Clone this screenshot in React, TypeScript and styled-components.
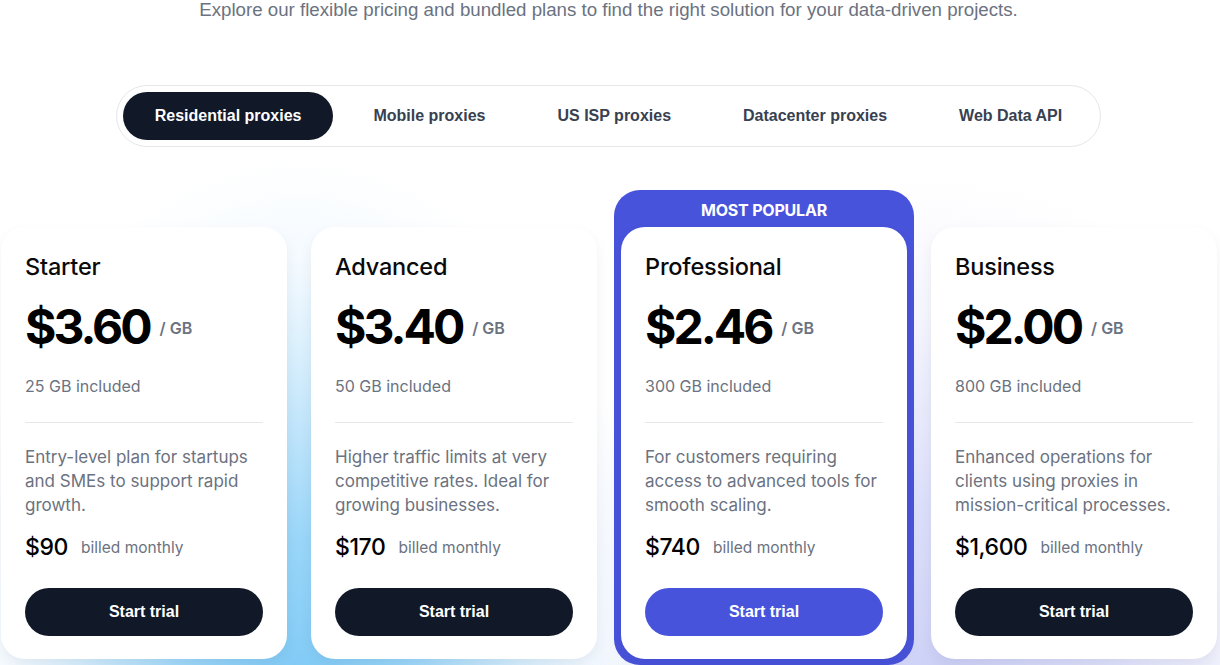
import React from "react";
import styled, { createGlobalStyle } from "styled-components";

const GlobalStyle = createGlobalStyle`
  html, body { margin: 0; padding: 0; background: #ffffff; }
  body { font-family: "Liberation Sans", Arial, sans-serif; -webkit-font-smoothing: antialiased; }
  * { box-sizing: border-box; }
`;

const Page = styled.div`
  width: 1220px;
  height: 665px;
  overflow: hidden;
  display: flex;
  flex-direction: column;
  align-items: center;
  background:
    radial-gradient(ellipse 360px 540px at 300px 700px, #7cc9f6 0%, #9ad6f9 30%, #d6eefd 62%, rgba(235,246,255,0.6) 80%, rgba(255,255,255,0) 100%),
    radial-gradient(ellipse 420px 540px at 940px 720px, #c9cdf5 0%, #dcdffa 40%, rgba(240,241,253,0.7) 75%, rgba(255,255,255,0) 100%),
    #ffffff;
`;

const Subtitle = styled.p`
  margin: 0;
  font-family: "Liberation Sans", Arial, sans-serif;
  font-size: 18.7px;
  line-height: 20px;
  color: #6b7280;
  text-align: center;
  margin-left: -3px;
`;

const Tabs = styled.div`
  margin-top: 65px;
  display: flex;
  gap: 8px;
  padding: 6px;
  border: 1px solid #e5e7eb;
  border-radius: 32px;
  background: #ffffff;
  margin-left: -3px;
`;

const Tab = styled.button<{ $active?: boolean }>`
  border: 0;
  height: 48px;
  padding: 0 32px;
  border-radius: 24px;
  font-family: "Liberation Sans", Arial, sans-serif;
  font-weight: 700;
  font-size: 16px;
  cursor: pointer;
  background: ${(p) => (p.$active ? "#111827" : "transparent")};
  color: ${(p) => (p.$active ? "#ffffff" : "#374151")};
`;

const Plans = styled.div`
  margin-top: 43px;
  display: grid;
  grid-template-columns: repeat(4, 286px);
  column-gap: 24px;
  align-items: start;
  margin-left: -2px;
`;

const Slot = styled.div`
  padding-top: 37px;
`;

const PopularWrap = styled.div`
  margin: 0 -7px;
  padding: 0 7px 6px;
  background: #4853dc;
  border-radius: 26px;
`;

const PopularLabel = styled.div`
  height: 37px;
  padding-top: 3px;
  display: flex;
  align-items: center;
  justify-content: center;
  color: #ffffff;
  font-family: Inter, "Liberation Sans", sans-serif;
  font-weight: 700;
  font-size: 16px;
  letter-spacing: -0.2px;
`;

const Card = styled.div`
  background: #ffffff;
  border-radius: 24px;
  padding: 24px 24px 23px;
  height: 432px;
  display: flex;
  flex-direction: column;
  box-shadow: 0 6px 14px rgba(17, 24, 39, 0.06);
  font-family: Inter, "Liberation Sans", sans-serif;
`;

const Title = styled.h3`
  margin: 0;
  font-size: 23.5px;
  line-height: 32px;
  font-weight: 500;
  color: #0a0a0a;
  letter-spacing: -0.2px;
`;

const PriceRow = styled.div`
  margin-top: 16px;
  height: 56px;
  display: flex;
  align-items: center;
  gap: 10px;
`;

const Price = styled.span`
  font-size: 48px;
  line-height: 56px;
  font-weight: 700;
  color: #000000;
  letter-spacing: -3px;
`;

const Unit = styled.span`
  font-size: 16px;
  font-weight: 600;
  color: #6b7280;
  margin-top: 2px;
`;

const Included = styled.div`
  margin-top: 19px;
  font-size: 16px;
  line-height: 24px;
  color: #6b7280;
`;

const Divider = styled.hr`
  margin: 24px 0 0;
  border: 0;
  border-top: 1px solid #e5e7eb;
`;

const Description = styled.p`
  margin: 22px 0 0;
  font-size: 17px;
  line-height: 24px;
  color: #6b7280;
`;

const Billing = styled.div`
  margin-top: 14px;
  height: 32px;
  display: flex;
  align-items: center;
  gap: 13px;
`;

const Total = styled.span`
  font-size: 23px;
  font-weight: 500;
  color: #000000;
  letter-spacing: -0.4px;
`;

const Period = styled.span`
  font-size: 15.5px;
  color: #6b7280;
`;

const TrialButton = styled.button<{ $accent?: boolean }>`
  margin-top: auto;
  height: 48px;
  width: 100%;
  border: 0;
  border-radius: 24px;
  background: ${(p) => (p.$accent ? "#4853dc" : "#111827")};
  color: #ffffff;
  font-family: "Liberation Sans", Arial, sans-serif;
  font-weight: 700;
  font-size: 16px;
  cursor: pointer;
`;

type Plan = {
  name: string;
  price: string;
  included: string;
  description: string;
  total: string;
  popular?: boolean;
};

const plans: Plan[] = [
  {
    name: "Starter",
    price: "$3.60",
    included: "25 GB included",
    description: "Entry-level plan for startups and SMEs to support rapid growth.",
    total: "$90",
  },
  {
    name: "Advanced",
    price: "$3.40",
    included: "50 GB included",
    description: "Higher traffic limits at very competitive rates. Ideal for growing businesses.",
    total: "$170",
  },
  {
    name: "Professional",
    price: "$2.46",
    included: "300 GB included",
    description: "For customers requiring access to advanced tools for smooth scaling.",
    total: "$740",
    popular: true,
  },
  {
    name: "Business",
    price: "$2.00",
    included: "800 GB included",
    description: "Enhanced operations for clients using proxies in mission-critical processes.",
    total: "$1,600",
  },
];

const tabs = ["Residential proxies", "Mobile proxies", "US ISP proxies", "Datacenter proxies", "Web Data API"];

function PlanCard({ plan }: { plan: Plan }) {
  return (
    <Card>
      <Title>{plan.name}</Title>
      <PriceRow>
        <Price>{plan.price}</Price>
        <Unit>/ GB</Unit>
      </PriceRow>
      <Included>{plan.included}</Included>
      <Divider />
      <Description>{plan.description}</Description>
      <Billing>
        <Total>{plan.total}</Total>
        <Period>billed monthly</Period>
      </Billing>
      <TrialButton $accent={plan.popular}>Start trial</TrialButton>
    </Card>
  );
}

export default function App() {
  return (
    <>
      <GlobalStyle />
      <Page>
        <Subtitle>
          Explore our flexible pricing and bundled plans to find the right solution for your data-driven projects.
        </Subtitle>
        <Tabs>
          {tabs.map((t, i) => (
            <Tab key={t} $active={i === 0}>
              {t}
            </Tab>
          ))}
        </Tabs>
        <Plans>
          {plans.map((p) =>
            p.popular ? (
              <PopularWrap key={p.name}>
                <PopularLabel>MOST POPULAR</PopularLabel>
                <PlanCard plan={p} />
              </PopularWrap>
            ) : (
              <Slot key={p.name}>
                <PlanCard plan={p} />
              </Slot>
            )
          )}
        </Plans>
      </Page>
    </>
  );
}
